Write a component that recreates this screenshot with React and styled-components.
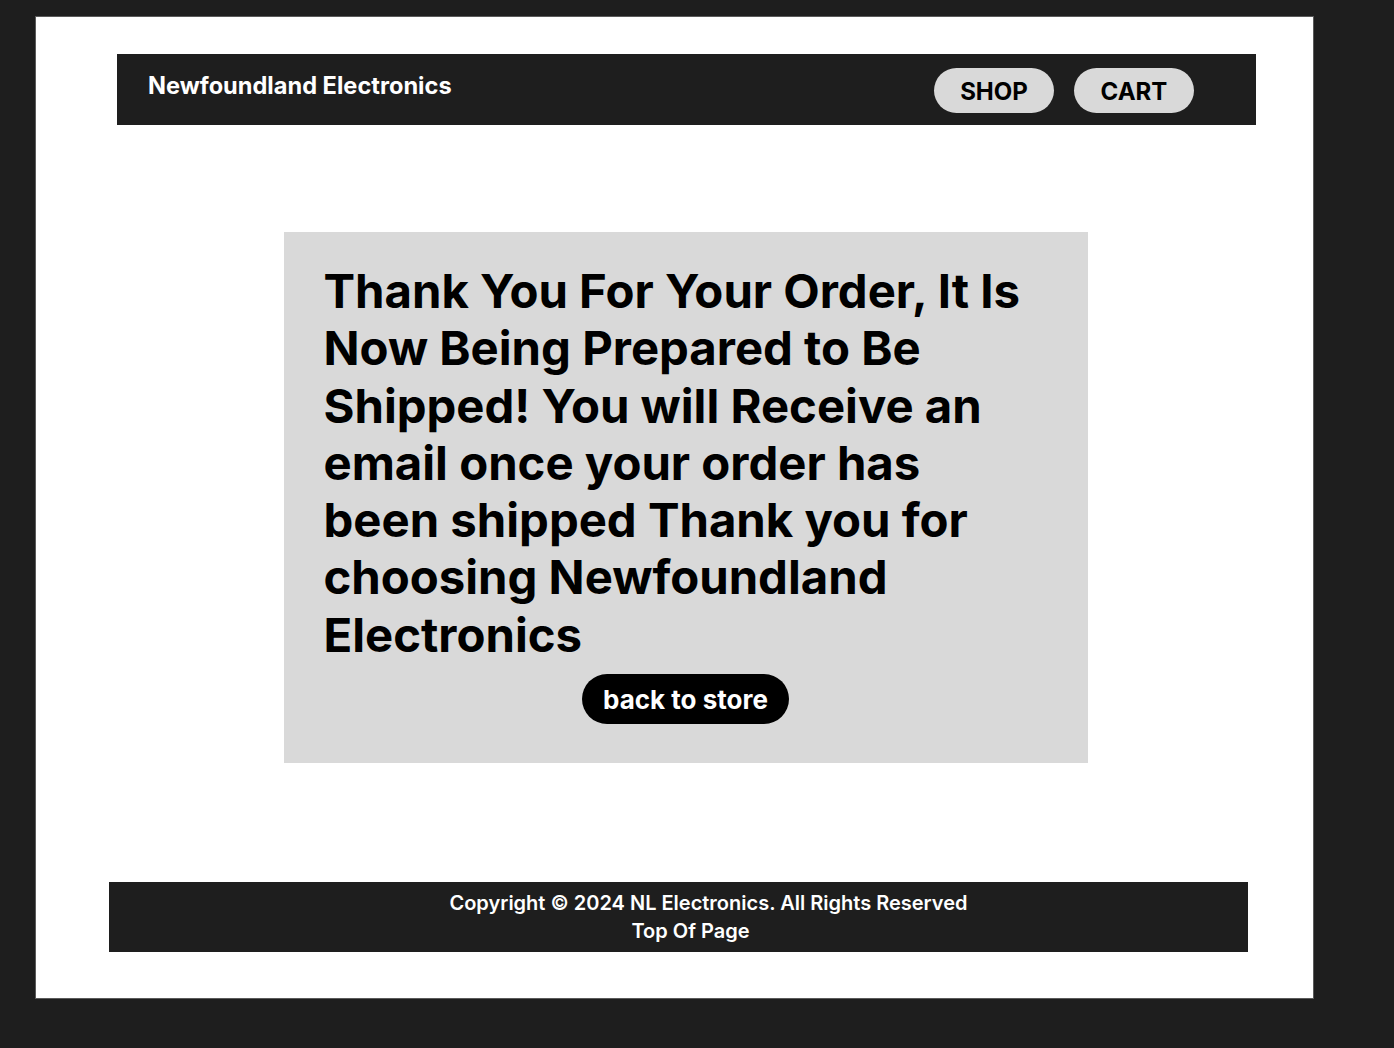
import styled, { createGlobalStyle } from "styled-components";

const GlobalStyle = createGlobalStyle`
    html, body {
        margin: 0;
        padding: 0;
        background-color: #1e1e1e;
        font-family: 'Inter', 'Noto Sans', sans-serif;
    }
`

export default function App(){
    return(
        <>
            <GlobalStyle />
            <Page>
                <Frame>
                    <Header>
                        <h1>Newfoundland Electronics</h1>
                        <Nav>
                            <NavButton>SHOP</NavButton>
                            <NavButton>CART</NavButton>
                        </Nav>
                    </Header>

                    <Main>
                        <Card>
                            <Message>
                                Thank You For Your Order, It Is Now Being Prepared to Be Shipped! You will Receive an email once your order has been shipped Thank you for choosing Newfoundland Electronics
                            </Message>
                            <BackButton>back to store</BackButton>
                        </Card>
                    </Main>

                    <Footer>
                        <FooterLine shift={60}>Copyright © 2024 NL Electronics. All Rights Reserved</FooterLine>
                        <FooterLine shift={24}>Top Of Page</FooterLine>
                    </Footer>
                </Frame>
            </Page>
        </>
    )
}

const Page = styled.div`
    width: 1394px;
    height: 1048px;
    padding: 16px 0 0 35px;
    box-sizing: border-box;
`

const Frame = styled.div`
    width: 1279px;
    height: 983px;
    box-sizing: border-box;
    background-color: #FFFFFF;
    border: 1px solid #5a5a5a;
    padding: 37px 0 0 0;
    display: flex;
    flex-direction: column;
`

const Header = styled.div`
    margin-left: 81px;
    width: 1139px;
    height: 71px;
    box-sizing: border-box;
    background-color: #1e1e1e;
    display: flex;
    justify-content: space-between;
    align-items: flex-start;
    padding: 0 62px 0 31px;

    h1{
        margin: 17px 0 0 0;
        font-size: 23.6px;
        font-weight: 700;
        line-height: 30px;
        color: #FFFFFF;
    }
`

const Nav = styled.div`
    display: flex;
    gap: 20px;
    margin-top: 14px;
`

const NavButton = styled.button`
    width: 120px;
    height: 45px;
    border: none;
    border-radius: 23px;
    background-color: #D9D9D9;
    font-family: 'Inter', sans-serif;
    font-size: 24px;
    font-weight: 700;
    color: #000000;
    padding: 0;
    padding-top: 1px;
`

const Main = styled.div`
    display: flex;
    justify-content: center;
    padding-top: 107px;
    padding-left: 22px;
`

const Card = styled.div`
    width: 804px;
    height: 531px;
    box-sizing: border-box;
    background-color: #D9D9D9;
    padding: 30px 40px 0 40px;
    display: flex;
    flex-direction: column;
    align-items: center;
`

const Message = styled.h2`
    margin: 0;
    width: 100%;
    padding-right: 20px;
    box-sizing: border-box;
    font-size: 47.3px;
    font-weight: 700;
    line-height: 57.3px;
    color: #000000;
`

const BackButton = styled.button`
    margin-top: 11px;
    width: 207px;
    height: 50px;
    border: none;
    border-radius: 25px;
    background-color: #000000;
    color: #FFFFFF;
    font-family: 'Inter', sans-serif;
    font-size: 26px;
    font-weight: 700;
    padding: 0;
`

const Footer = styled.div`
    margin-top: 119px;
    margin-left: 73px;
    width: 1139px;
    height: 70px;
    box-sizing: border-box;
    background-color: #1e1e1e;
    display: flex;
    flex-direction: column;
    align-items: center;
    padding-top: 7px;
`

const FooterLine = styled.p`
    margin: 0 0 0 ${props => props.shift}px;
    font-size: 20px;
    font-weight: 600;
    line-height: 28px;
    color: #FFFFFF;
`
